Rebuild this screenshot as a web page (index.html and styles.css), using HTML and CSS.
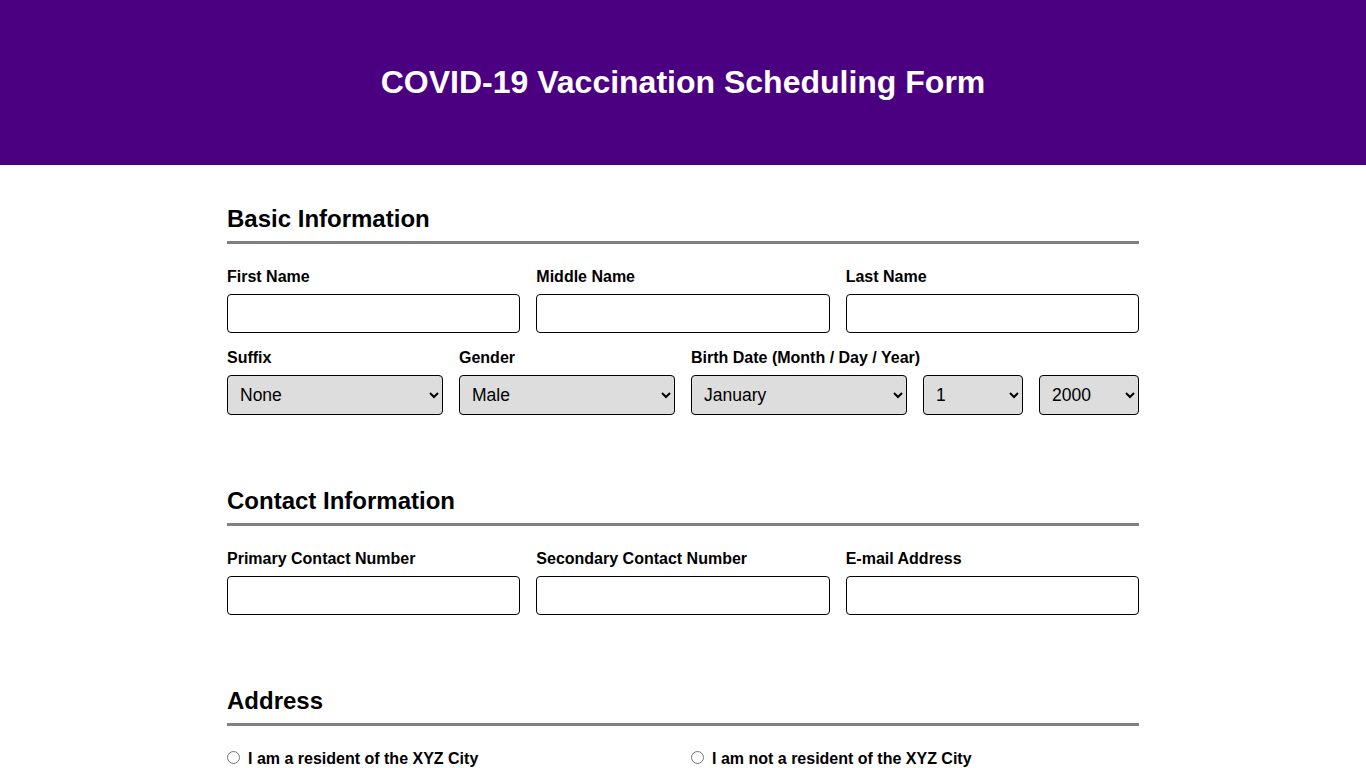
FILE: index.html
```html
<!DOCTYPE html>
<html lang="en">
<head>
<meta charset="utf-8">
<title>COVID-19 Vaccination Scheduling Form</title>
<link rel="stylesheet" href="styles.css">
</head>
<body>
<header class="banner">
  <h1 class="banner-title">COVID-19 Vaccination Scheduling Form</h1>
</header>
<main class="form-wrap">
  <section class="form-section">
    <h2 class="section-title">Basic Information</h2>
    <div class="row row-3">
      <div class="field"><label class="field-label">First Name</label><input class="text-input" type="text"></div>
      <div class="field"><label class="field-label">Middle Name</label><input class="text-input" type="text"></div>
      <div class="field"><label class="field-label">Last Name</label><input class="text-input" type="text"></div>
    </div>
    <div class="row row-5">
      <div class="field"><label class="field-label">Suffix</label>
        <select class="select-input"><option>None</option><option>Jr.</option><option>Sr.</option></select></div>
      <div class="field"><label class="field-label">Gender</label>
        <select class="select-input"><option>Male</option><option>Female</option></select></div>
      <div class="field field-span3"><label class="field-label">Birth Date (Month / Day / Year)</label>
        <div class="date-row">
          <select class="select-input"><option>January</option><option>February</option></select>
          <select class="select-input"><option>1</option><option>2</option></select>
          <select class="select-input"><option>2000</option><option>2001</option></select>
        </div>
      </div>
    </div>
  </section>
  <section class="form-section">
    <h2 class="section-title">Contact Information</h2>
    <div class="row row-3">
      <div class="field"><label class="field-label">Primary Contact Number</label><input class="text-input" type="text"></div>
      <div class="field"><label class="field-label">Secondary Contact Number</label><input class="text-input" type="text"></div>
      <div class="field"><label class="field-label">E-mail Address</label><input class="text-input" type="text"></div>
    </div>
  </section>
  <section class="form-section">
    <h2 class="section-title">Address</h2>
    <div class="row row-2">
      <label class="radio-label"><input class="radio" type="radio" name="res"> I am a resident of the XYZ City</label>
      <label class="radio-label"><input class="radio" type="radio" name="res"> I am not a resident of the XYZ City</label>
    </div>
  </section>
</main>
</body>
</html>
```

FILE: styles.css
```css
* { box-sizing: border-box; }
body {
  margin: 0;
  font-family: "Liberation Sans", Arial, sans-serif;
  color: #000;
  background: #fff;
}
.banner {
  background: #4b0082;
  height: 165px;
  display: flex;
  align-items: center;
  justify-content: center;
}
.banner-title {
  margin: 0;
  color: #fff;
  font-size: 32px;
  font-weight: bold;
}
.form-wrap {
  width: 912px;
  margin: 0 auto;
}
.form-section {
  padding: 40px 0 32px;
}
.section-title {
  margin: 0 0 23px;
  font-size: 24px;
  line-height: 28px;
  padding-bottom: 8px;
  border-bottom: 3px solid #808080;
}
.row {
  display: grid;
  gap: 16px;
  margin-top: 15px;
}
.section-title + .row { margin-top: 0; }
.row-3 { grid-template-columns: repeat(3, 1fr); }
.row-5 { grid-template-columns: 216px 216px 1fr; }
.row-2 { grid-template-columns: 1fr 1fr; }
.field { display: flex; flex-direction: column; }
.field-label {
  font-size: 16px;
  font-weight: bold;
  line-height: 18px;
  padding-top: 1px;
  margin-bottom: 8px;
}
.text-input {
  height: 39px;
  border: 1px solid #000;
  border-radius: 4px;
  background: #fff;
  font-family: inherit;
  font-size: 17px;
  padding: 0 8px;
}
.select-input {
  height: 40px;
  border: 1px solid #000;
  border-radius: 4px;
  background: #ddd;
  font-family: inherit;
  font-size: 17.5px;
  padding: 0 8px;
  color: #000;
}
.date-row {
  display: grid;
  grid-template-columns: 216px 100px 100px;
  gap: 16px;
}
.radio-label {
  display: flex;
  align-items: flex-start;
  font-size: 16px;
  font-weight: bold;
  line-height: 18px;
  padding-top: 1px;
}
.radio {
  margin: 1px 8px 0 0;
  width: 13px;
  height: 13px;
}
```
